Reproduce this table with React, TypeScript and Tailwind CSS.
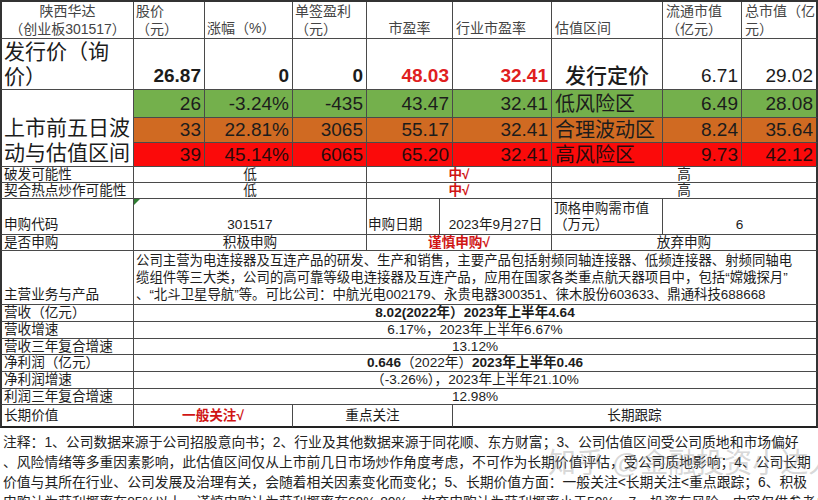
import React from "react";

const FONT = { fontFamily: '"Liberation Sans", "Noto Sans CJK SC", sans-serif' };
const B = "border-[#4a4a4a]";

function TopCell({ children, className = "" }: { children?: React.ReactNode; className?: string }) {
  return <div className={`border-r border-b ${B} overflow-hidden whitespace-nowrap ${className}`}>{children}</div>;
}

function Row({ h, children, className = "" }: { h: string; children: React.ReactNode; className?: string }) {
  return <div className={`flex ${h} ${className}`}>{children}</div>;
}

function C({ w, children, className = "" }: { w: string; children?: React.ReactNode; className?: string }) {
  return (
    <div className={`${w} shrink-0 border-r border-b ${B} overflow-hidden whitespace-nowrap flex ${className}`}>
      {children}
    </div>
  );
}

export default function App() {
  const red = "text-[#e0201f]";
  const dred = "text-[#d01515]";
  return (
    <div className="w-[818px] h-[500px] overflow-hidden bg-white text-[#1c1c1c] relative" style={FONT}>
      {/* Top section */}
      <div className="grid grid-cols-[134px_71px_88px_74px_86px_99px_111px_79px_76px] grid-rows-[37px_51px_28px_25px_24px] border-t-2 border-[#333]">
        {/* header */}
        <TopCell className="border-l-2 border-l-[#333] flex flex-col items-center justify-center text-[14px] leading-[18px] text-[#444]">
          <span>陕西华达</span>
          <span>（创业板301517）</span>
        </TopCell>
        <TopCell className="flex flex-col justify-center px-[2px] text-[14px] leading-[18px] text-[#444]">
          <span>股价</span>
          <span>（元）</span>
        </TopCell>
        <TopCell className="flex items-end px-[2px] pb-[1px] text-[14px] leading-[18px] text-[#444]">
          <span>涨幅（%）</span>
        </TopCell>
        <TopCell className="flex flex-col justify-center px-[2px] text-[14px] leading-[18px] text-[#444]">
          <span>单签盈利</span>
          <span>（元）</span>
        </TopCell>
        <TopCell className="flex items-end justify-center pb-[1px] text-[14px] leading-[18px] text-[#444]">
          <span>市盈率</span>
        </TopCell>
        <TopCell className="flex items-end px-[3px] pb-[1px] text-[14px] leading-[18px] text-[#444]">
          <span>行业市盈率</span>
        </TopCell>
        <TopCell className="flex items-end px-[3px] pb-[1px] text-[14px] leading-[18px] text-[#444]">
          <span>估值区间</span>
        </TopCell>
        <TopCell className="flex flex-col justify-center px-[3px] text-[14px] leading-[18px] text-[#444]">
          <span>流通市值</span>
          <span>（亿元）</span>
        </TopCell>
        <TopCell className="flex flex-col justify-center px-[3px] text-[14px] leading-[18px] text-[#444] border-r-2 border-r-[#333]">
          <span>总市值（亿</span>
          <span>元）</span>
        </TopCell>

        {/* 发行价 row */}
        <TopCell className="border-l-2 border-l-[#333] flex flex-col justify-center px-[2px] text-[21px] leading-[25px]">
          <span>发行价（询</span>
          <span>价）</span>
        </TopCell>
        <TopCell className="flex items-end justify-end px-[3px] pb-[1px] text-[19px] leading-[24px] font-bold">26.87</TopCell>
        <TopCell className="flex items-end justify-end px-[3px] pb-[1px] text-[19px] leading-[24px] font-bold">0</TopCell>
        <TopCell className="flex items-end justify-end px-[3px] pb-[1px] text-[19px] leading-[24px] font-bold">0</TopCell>
        <TopCell className={`flex items-end justify-end px-[3px] pb-[1px] text-[19px] leading-[24px] font-bold ${red}`}>48.03</TopCell>
        <TopCell className={`flex items-end justify-end px-[3px] pb-[1px] text-[19px] leading-[24px] font-bold ${red}`}>32.41</TopCell>
        <TopCell className="flex items-end justify-center text-[21px] leading-[26px] font-medium">发行定价</TopCell>
        <TopCell className="flex items-end justify-end px-[3px] pb-[1px] text-[19px] leading-[24px] font-medium">6.71</TopCell>
        <TopCell className="flex items-end justify-end px-[3px] pb-[1px] text-[19px] leading-[24px] font-medium border-r-2 border-r-[#333]">29.02</TopCell>

        {/* label spanning 3 colored rows */}
        <TopCell className="row-span-3 border-l-2 border-l-[#333] flex flex-col justify-end px-[2px] pb-[1px] text-[21px] leading-[25px]">
          <span>上市前五日波</span>
          <span>动与估值区间</span>
        </TopCell>

        {/* green row */}
        {["26", "-3.24%", "-435", "43.47", "32.41"].map((v, i) => (
          <TopCell key={"g" + i} className="bg-[#74b04c] flex items-center justify-end px-[3px] text-[19px] leading-[24px]">{v}</TopCell>
        ))}
        <TopCell className="bg-[#74b04c] flex items-center px-[3px] text-[20px] leading-[24px]">低风险区</TopCell>
        <TopCell className="bg-[#74b04c] flex items-center justify-end px-[3px] text-[19px] leading-[24px]">6.49</TopCell>
        <TopCell className="bg-[#74b04c] flex items-center justify-end px-[3px] text-[19px] leading-[24px] border-r-2 border-r-[#333]">28.08</TopCell>

        {/* orange row */}
        {["33", "22.81%", "3065", "55.17", "32.41"].map((v, i) => (
          <TopCell key={"o" + i} className="bg-[#d06a22] flex items-center justify-end px-[3px] text-[19px] leading-[24px]">{v}</TopCell>
        ))}
        <TopCell className="bg-[#d06a22] flex items-center px-[3px] text-[20px] leading-[24px]">合理波动区</TopCell>
        <TopCell className="bg-[#d06a22] flex items-center justify-end px-[3px] text-[19px] leading-[24px]">8.24</TopCell>
        <TopCell className="bg-[#d06a22] flex items-center justify-end px-[3px] text-[19px] leading-[24px] border-r-2 border-r-[#333]">35.64</TopCell>

        {/* red row */}
        {["39", "45.14%", "6065", "65.20", "32.41"].map((v, i) => (
          <TopCell key={"r" + i} className="bg-[#fb0a0a] flex items-center justify-end px-[3px] text-[19px] leading-[24px] text-[#2a0a0a]">{v}</TopCell>
        ))}
        <TopCell className="bg-[#fb0a0a] flex items-center px-[3px] text-[20px] leading-[24px] text-[#2a0a0a]">高风险区</TopCell>
        <TopCell className="bg-[#fb0a0a] flex items-center justify-end px-[3px] text-[19px] leading-[24px] text-[#2a0a0a]">9.73</TopCell>
        <TopCell className="bg-[#fb0a0a] flex items-center justify-end px-[3px] text-[19px] leading-[24px] text-[#2a0a0a] border-r-2 border-r-[#333]">42.12</TopCell>
      </div>

      {/* Lower section */}
      <div className="text-[13.6px] leading-[16px]">
        <Row h="h-[16px]">
          <C w="w-[134px]" className="border-l-2 border-l-[#333] px-[2px] items-center">破发可能性</C>
          <C w="w-[233px]" className="justify-center items-center">低</C>
          <C w="w-[185px]" className={`justify-center items-center font-bold ${dred}`}>中√</C>
          <C w="w-[266px]" className="justify-center items-center border-r-2 border-r-[#333]">高</C>
        </Row>
        <Row h="h-[16px]">
          <C w="w-[134px]" className="border-l-2 border-l-[#333] px-[2px] items-center">契合热点炒作可能性</C>
          <C w="w-[233px]" className="justify-center items-center">低</C>
          <C w="w-[185px]" className={`justify-center items-center font-bold ${dred}`}>中√</C>
          <C w="w-[266px]" className="justify-center items-center border-r-2 border-r-[#333]">高</C>
        </Row>
        <Row h="h-[36px]">
          <C w="w-[134px]" className="border-l-2 border-l-[#333] px-[2px] items-end pb-[1px]">申购代码</C>
          <C w="w-[233px]" className="justify-center items-end pb-[1px] relative">
            <span className="absolute left-0 top-0 w-0 h-0 border-t-[6px] border-r-[6px] border-t-[#2f7d32] border-r-transparent" />
            301517
          </C>
          <C w="w-[73px]" className="px-[1px] items-end pb-[1px]">申购日期</C>
          <C w="w-[112px]" className="justify-center items-end pb-[1px]">2023年9月27日</C>
          <C w="w-[111px]" className="flex-col justify-end px-[2px] pb-[1px]">
            <span>顶格申购需市值</span>
            <span>（万元）</span>
          </C>
          <C w="w-[155px]" className="justify-center items-end pb-[1px] border-r-2 border-r-[#333]">6</C>
        </Row>
        <Row h="h-[16px]">
          <C w="w-[134px]" className="border-l-2 border-l-[#333] px-[2px] items-center">是否申购</C>
          <C w="w-[233px]" className="justify-center items-center">积极申购</C>
          <C w="w-[185px]" className={`justify-center items-center font-bold ${dred}`}>谨慎申购√</C>
          <C w="w-[266px]" className="justify-center items-center border-r-2 border-r-[#333]">放弃申购</C>
        </Row>
        <Row h="h-[54px]">
          <C w="w-[134px]" className="border-l-2 border-l-[#333] px-[2px] items-end pb-[1px]">主营业务与产品</C>
          <C w="w-[684px]" className="flex-col justify-center px-[2px] text-[13.4px] leading-[17px] border-r-2 border-r-[#333]">
            <span>公司主营为电连接器及互连产品的研发、生产和销售，主要产品包括射频同轴连接器、低频连接器、射频同轴电</span>
            <span>缆组件等三大类，公司的高可靠等级电连接器及互连产品，应用在国家各类重点航天器项目中，包括“嫦娥探月”</span>
            <span>、“北斗卫星导航”等。可比公司：中航光电002179、永贵电器300351、徕木股份603633、鼎通科技688668</span>
          </C>
        </Row>
        <Row h="h-[17px]">
          <C w="w-[134px]" className="border-l-2 border-l-[#333] px-[2px] items-center">营收（亿元）</C>
          <C w="w-[684px]" className="justify-center items-center font-bold border-r-2 border-r-[#333]">8.02(2022年）2023年上半年4.64</C>
        </Row>
        <Row h="h-[17px]">
          <C w="w-[134px]" className="border-l-2 border-l-[#333] px-[2px] items-center">营收增速</C>
          <C w="w-[684px]" className="justify-center items-center border-r-2 border-r-[#333]">6.17%，2023年上半年6.67%</C>
        </Row>
        <Row h="h-[16px]">
          <C w="w-[134px]" className="border-l-2 border-l-[#333] px-[2px] items-center">营收三年复合增速</C>
          <C w="w-[684px]" className="justify-center items-center border-r-2 border-r-[#333]">13.12%</C>
        </Row>
        <Row h="h-[17px]">
          <C w="w-[134px]" className="border-l-2 border-l-[#333] px-[2px] items-center">净利润（亿元）</C>
          <C w="w-[684px]" className="justify-center items-center border-r-2 border-r-[#333]">
            <span className="font-bold">0.646</span>
            <span>（2022年）</span>
            <span className="font-bold">2023年上半年0.46</span>
          </C>
        </Row>
        <Row h="h-[17px]">
          <C w="w-[134px]" className="border-l-2 border-l-[#333] px-[2px] items-center">净利润增速</C>
          <C w="w-[684px]" className="justify-center items-center border-r-2 border-r-[#333]">（-3.26%），2023年上半年21.10%</C>
        </Row>
        <Row h="h-[16px]">
          <C w="w-[134px]" className="border-l-2 border-l-[#333] px-[2px] items-center">利润三年复合增速</C>
          <C w="w-[684px]" className="justify-center items-center border-r-2 border-r-[#333]">12.98%</C>
        </Row>
        <Row h="h-[23px]">
          <C w="w-[134px]" className="border-l-2 border-l-[#333] border-b-2 border-b-[#222] px-[2px] items-center">长期价值</C>
          <C w="w-[159px]" className={`justify-center items-center font-bold border-b-2 border-b-[#222] ${dred}`}>一般关注√</C>
          <C w="w-[160px]" className="justify-center items-center border-b-2 border-b-[#222]">重点关注</C>
          <C w="w-[365px]" className="justify-center items-center border-b-2 border-b-[#222] border-r-2 border-r-[#333]">长期跟踪</C>
        </Row>
      </div>

      {/* Notes */}
      <div className="pt-[5px] pl-[3px] text-[13.8px] leading-[20px] text-[#222] whitespace-nowrap">
        <div>注释：1、公司数据来源于公司招股意向书；2、行业及其他数据来源于同花顺、东方财富；3、公司估值区间受公司质地和市场偏好</div>
        <div>、风险情绪等多重因素影响，此估值区间仅从上市前几日市场炒作角度考虑，不可作为长期价值评估，受公司质地影响；4、公司长期</div>
        <div>价值与其所在行业、公司发展及治理有关，会随着相关因素变化而变化；5、长期价值方面：一般关注&lt;长期关注&lt;重点跟踪；6、积极</div>
        <div>申购认为获利概率在85%以上，谨慎申购认为获利概率在60%-80%，放弃申购认为获利概率小于50%。7、投资有风险，内容仅供参考；</div>
      </div>
      <div className="absolute left-[548px] top-[448px] text-[28px] leading-[32px] text-[#9a9a9a]/40 whitespace-nowrap pointer-events-none">知乎 @金融投资小达人</div>
    </div>
  );
}
